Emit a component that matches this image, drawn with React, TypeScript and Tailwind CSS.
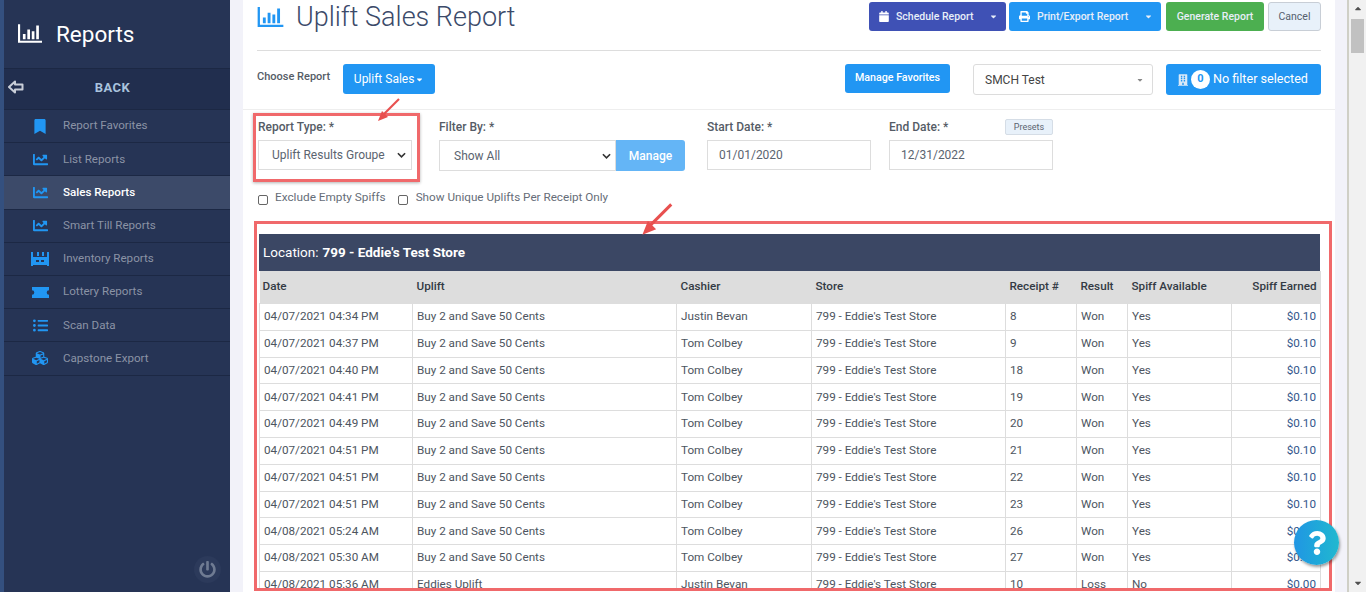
// Uplift Sales Report page
import React from 'react';
import { FaBookmark, FaChartLine, FaListUl, FaCubes, FaPowerOff, FaCalendar, FaPrint, FaBuilding, FaQuestion, FaCaretDown } from 'react-icons/fa';

const BarsIcon = ({ className }: { className: string }) => (
  <svg viewBox="0 0 27 21" className={className} fill="none" stroke="currentColor" strokeWidth="2.4">
    <path d="M1.2 0v19.8H27" />
    <path d="M7 11v6M12 6v11M17 8v9M22 1.5V17" strokeWidth="3" />
  </svg>
);

const InventoryIcon = ({ className }: { className: string }) => (
  <svg viewBox="0 0 18 14" className={className} fill="currentColor">
    <path d="M0 0h2v5h14V0h2v14h-2v-1H2v1H0z" />
    <path d="M6 0h2v4H6zM11 0h2v4h-2z" />
    <path d="M3 7h12v4H3z" />
    <path d="M5 8h3v2H5zM10 8h3v2h-3z" fill="#263455" />
  </svg>
);

const TicketIcon = ({ className }: { className: string }) => (
  <svg viewBox="0 0 17 11" className={className} fill="currentColor">
    <path d="M0 0h17v3.2a2.3 2.3 0 0 0 0 4.6V11H0V7.800a2.300 2.300 0 0 0 0-4.600z" />
  </svg>
);

const BackIcon = () => (
  <svg viewBox="0 0 16 14" className="w-[16px] h-[14px]" fill="none" stroke="#c9ced8" strokeWidth="2" strokeLinejoin="round">
    <path d="M1 7l6-5.500V4.500h7.500v5H7v3z" />
  </svg>
);

const Arrow = ({ className }: { className: string }) => (
  <svg viewBox="0 0 24 24" className={`absolute ${className}`} fill="none">
    <path d="M22 1L6 17" stroke="#e8504f" strokeWidth="2.2" />
    <path d="M1 23l4-10 6 6z" fill="#e8504f" />
  </svg>
);

const navItems = [
  { label: 'Report Favorites', icon: <FaBookmark className="w-[12px] h-[15px]" /> },
  { label: 'List Reports', icon: <FaChartLine className="w-[15px] h-[15px]" /> },
  { label: 'Sales Reports', icon: <FaChartLine className="w-[15px] h-[15px]" />, active: true },
  { label: 'Smart Till Reports', icon: <FaChartLine className="w-[15px] h-[15px]" /> },
  { label: 'Inventory Reports', icon: <InventoryIcon className="w-[18px] h-[14px]" /> },
  { label: 'Lottery Reports', icon: <TicketIcon className="w-[17px] h-[13px]" /> },
  { label: 'Scan Data', icon: <FaListUl className="w-[15px] h-[15px]" /> },
  { label: 'Capstone Export', icon: <FaCubes className="w-[16px] h-[16px]" /> },
];

const rows = [
  ['04/07/2021 04:34 PM', 'Buy 2 and Save 50 Cents', 'Justin Bevan', '8', 'Won', 'Yes', '$0.10'],
  ['04/07/2021 04:37 PM', 'Buy 2 and Save 50 Cents', 'Tom Colbey', '9', 'Won', 'Yes', '$0.10'],
  ['04/07/2021 04:40 PM', 'Buy 2 and Save 50 Cents', 'Tom Colbey', '18', 'Won', 'Yes', '$0.10'],
  ['04/07/2021 04:41 PM', 'Buy 2 and Save 50 Cents', 'Tom Colbey', '19', 'Won', 'Yes', '$0.10'],
  ['04/07/2021 04:49 PM', 'Buy 2 and Save 50 Cents', 'Tom Colbey', '20', 'Won', 'Yes', '$0.10'],
  ['04/07/2021 04:51 PM', 'Buy 2 and Save 50 Cents', 'Tom Colbey', '21', 'Won', 'Yes', '$0.10'],
  ['04/07/2021 04:51 PM', 'Buy 2 and Save 50 Cents', 'Tom Colbey', '22', 'Won', 'Yes', '$0.10'],
  ['04/07/2021 04:51 PM', 'Buy 2 and Save 50 Cents', 'Tom Colbey', '23', 'Won', 'Yes', '$0.10'],
  ['04/08/2021 05:24 AM', 'Buy 2 and Save 50 Cents', 'Tom Colbey', '26', 'Won', 'Yes', '$0.10'],
  ['04/08/2021 05:30 AM', 'Buy 2 and Save 50 Cents', 'Tom Colbey', '27', 'Won', 'Yes', '$0.10'],
  ['04/08/2021 05:36 AM', 'Eddies Uplift', 'Justin Bevan', '10', 'Loss', 'No', '$0.00'],
];

const Sidebar = () => (
  <aside className="w-[230px] shrink-0 h-full bg-[#263455] border-l-[4px] border-[#34507f] flex flex-col relative">
    <div className="h-[68px] shrink-0 flex items-center pl-[14px] text-white">
      <BarsIcon className="w-[24px] h-[19px] mb-[1px]" />
      <span className="ml-[14px] mt-[2px] text-[22.5px]">Reports</span>
    </div>
    <div className="h-[42px] shrink-0 bg-[#212e4e] border-y border-[#1c2844] flex items-center justify-center relative pr-[9px]">
      <span className="absolute left-[4px] top-[11px]"><BackIcon /></span>
      <span className="text-[13px] font-bold tracking-[0.5px] text-[#a9c3de] mb-[2px]">BACK</span>
    </div>
    {navItems.map((item) => (
      <div
        key={item.label}
        className={`h-[33.2px] shrink-0 flex items-center border-b border-[#1c2844] ${item.active ? 'bg-[#3c4a69]' : ''}`}
      >
        <span className="w-[32px] ml-[20px] flex justify-center text-[#2196f3]">{item.icon}</span>
        <span className={`ml-[7px] text-[11.6px] ${item.active ? 'text-white font-medium' : 'text-[#8b93a5]'}`}>{item.label}</span>
      </div>
    ))}
    <div className="absolute right-[9px] bottom-[9px] w-[27px] h-[27px] rounded-full bg-[#2c3a5b] flex items-center justify-center text-[#6f7b92]">
      <FaPowerOff className="w-[17px] h-[17px]" />
    </div>
  </aside>
);

const TopBar = () => (
  <div className="mx-[14px] h-[51px] flex items-start justify-between border-b border-[#dddddd]">
    <div className="flex items-center h-[33px]">
      <BarsIcon className="w-[27px] h-[20px] text-[#2196f3]" />
      <h1 className="ml-[12px] mt-[2px] text-[27px] leading-[33px] font-light text-[#3b4a69]">Uplift Sales Report</h1>
    </div>
    <div className="flex items-start pt-[2px] text-[10.5px] font-medium text-[#e8eef8]">
      <button className="w-[137px] h-[29px] rounded-[3px] bg-[#3f51b5] flex items-center pl-[10px]">
        <FaCalendar className="w-[10px] h-[11px] text-white" />
        <span className="ml-[7px]">Schedule Report</span>
        <FaCaretDown className="w-[9px] h-[9px] ml-auto mr-[8px]" />
      </button>
      <button className="ml-[3px] w-[152px] h-[29px] rounded-[3px] bg-[#2196f3] flex items-center pl-[10px]">
        <FaPrint className="w-[11px] h-[11px] text-white" />
        <span className="ml-[7px]">Print/Export Report</span>
        <FaCaretDown className="w-[9px] h-[9px] ml-auto mr-[8px]" />
      </button>
      <button className="ml-[5px] w-[98px] h-[29px] rounded-[3px] bg-[#4caf50] text-center">Generate Report</button>
      <button className="ml-[4px] w-[53px] h-[29px] rounded-[3px] bg-[#e8f1fa] border border-[#c8ced6] text-[#55606e] font-normal">Cancel</button>
    </div>
  </div>
);

const ChooseRow = () => (
  <div className="h-[59px] pl-[14px] pr-[14px] flex items-start pt-[13px] border-b border-[#eeeeee]">
    <span className="text-[11px] font-medium text-[#555c66] mt-[5px]">Choose Report</span>
    <button className="ml-[13px] w-[92px] h-[30px] rounded-[3px] bg-[#2196f3] text-white text-[12px] flex items-center justify-center">
      Uplift Sales
      <FaCaretDown className="w-[9px] h-[9px] ml-[1px]" />
    </button>
    <button className="ml-auto w-[105px] h-[29px] rounded-[3px] bg-[#2196f3] text-white text-[10.7px] font-medium">Manage Favorites</button>
    <div className="ml-[23px] w-[180px] h-[31px] rounded-[3px] bg-white border border-[#dcdcdc] flex items-center pl-[11px] text-[12px] text-[#444]">
      SMCH Test
      <FaCaretDown className="w-[8px] h-[8px] ml-auto mr-[8px] text-[#888]" />
    </div>
    <button className="ml-[13px] w-[155px] h-[31px] rounded-[3px] bg-[#2196f3] text-white text-[12.6px] flex items-center pl-[12px]">
      <FaBuilding className="w-[10px] h-[14px] text-[#dbe9f7]" />
      <span className="ml-[3px] w-[19px] h-[19px] rounded-full bg-white text-[#2196f3] text-[11px] font-bold flex items-center justify-center">0</span>
      <span className="ml-[3px]">No filter selected</span>
    </button>
  </div>
);

const Chevron = () => (
  <svg viewBox="0 0 10 6" className="w-[9px] h-[6px] ml-auto mr-[4px]" fill="none" stroke="#333" strokeWidth="1.8">
    <path d="M1 1l4 4 4-4" />
  </svg>
);

const Label = ({ children }: { children: React.ReactNode }) => (
  <div className="text-[12px] leading-[14px] font-medium text-[#555c66]">{children}</div>
);

const FilterRow = () => (
  <div className="relative pl-[15px] pt-[10px] h-[72px] flex items-start">
    <div className="relative w-[154px]">
      <Label>Report Type: *</Label>
      <div className="mt-[6px] w-[154px] h-[30px] border border-[#dddddd] bg-white flex items-center pl-[13px] pr-[1px] text-[12px] text-[#5b6470]">
        Uplift Results Groupe
        <Chevron />
      </div>
      {/* red annotation box */}
      <div className="absolute left-[-5px] top-[-7px] w-[167px] h-[69px] border-[3px] border-[#f0696b] shadow-[0_1px_3px_rgba(0,0,0,0.3)]" />
    </div>
    <div className="ml-[27px] w-[246px]">
      <Label>Filter By: *</Label>
      <div className="mt-[6px] flex">
        <div className="w-[177px] h-[31px] border border-[#dddddd] flex items-center pl-[14px] text-[12px] text-[#5b6470]">
          Show All
          <Chevron />
        </div>
        <button className="w-[69px] h-[31px] rounded-r-[3px] bg-[#64b5f6] text-white text-[12px] font-medium">Manage</button>
      </div>
    </div>
    <div className="ml-[22px] w-[164px]">
      <Label>Start Date: *</Label>
      <div className="mt-[6px] h-[30px] border border-[#dddddd] flex items-center pl-[11px] text-[12px] text-[#5b6470]">01/01/2020</div>
    </div>
    <div className="ml-[18px] w-[164px] relative">
      <Label>End Date: *</Label>
      <span className="absolute right-0 top-[-1px] w-[48px] h-[16px] rounded-[2px] bg-[#e8f1fa] border border-[#d5dde6] text-[9px] leading-[14px] text-center text-[#5b6470]">Presets</span>
      <div className="mt-[6px] h-[30px] border border-[#dddddd] flex items-center pl-[11px] text-[12px] text-[#5b6470]">12/31/2022</div>
    </div>
  </div>
);

const CheckRow = () => (
  <div className="pl-[15px] h-[34px] flex items-start text-[#666d78]">
    <span className="mt-[13px] w-[10px] h-[10px] rounded-[2px] border border-[#666] bg-white" />
    <span className="ml-[7px] mt-[7px] text-[11.8px]">Exclude Empty Spiffs</span>
    <span className="ml-[12px] mt-[13px] w-[10px] h-[10px] rounded-[2px] border border-[#666] bg-white" />
    <span className="ml-[8px] mt-[7px] text-[11.7px]">Show Unique Uplifts Per Receipt Only</span>
  </div>
);

const cellClass = 'border border-[#dddddd] px-[4px] whitespace-nowrap overflow-hidden';

const ReportTable = () => (
  <div className="ml-[11px] mt-[5px] w-[1078px] h-[370px] border-[3px] border-[#f0696b] pl-[2px] pr-[9px] pt-[10px] overflow-hidden">
    <div className="h-[37px] bg-[#3b4764] text-white text-[13.500px] flex items-center pl-[4px]">
      <span>Location:</span>
      <span className="ml-[4px] font-bold">799 - Eddie's Test Store</span>
    </div>
    <table className="w-[1061px] table-fixed border-collapse text-[11.7px] text-[#4d5560]">
      <colgroup>
        <col className="w-[153px]" />
        <col className="w-[264px]" />
        <col className="w-[135px]" />
        <col className="w-[194px]" />
        <col className="w-[71px]" />
        <col className="w-[51px]" />
        <col className="w-[104px]" />
        <col className="w-[89px]" />
      </colgroup>
      <thead>
        <tr className="h-[32.5px] bg-[#dddddd] text-[#333a44] text-left font-medium">
          <th className="px-[3px] font-medium">Date</th>
          <th className="px-[4px] font-medium">Uplift</th>
          <th className="px-[4px] font-medium">Cashier</th>
          <th className="px-[4px] font-medium">Store</th>
          <th className="px-[4px] font-medium">Receipt #</th>
          <th className="px-[4px] font-medium">Result</th>
          <th className="px-[4px] font-medium">Spiff Available</th>
          <th className="px-[4px] font-medium text-right">Spiff Earned</th>
        </tr>
      </thead>
      <tbody>
        {rows.map((r, i) => (
          <tr key={i} className="h-[26.8px]">
            <td className={cellClass}>{r[0]}</td>
            <td className={cellClass}>{r[1]}</td>
            <td className={cellClass}>{r[2]}</td>
            <td className={cellClass}>799 - Eddie's Test Store</td>
            <td className={cellClass}>{r[3]}</td>
            <td className={cellClass}>{r[4]}</td>
            <td className={cellClass}>{r[5]}</td>
            <td className={`${cellClass} text-right text-[#34568b]`}>{r[6]}</td>
          </tr>
        ))}
      </tbody>
    </table>
  </div>
);

const Scrollbar = () => (
  <div className="w-[17px] shrink-0 h-full bg-[#f1f1f1] flex flex-col items-center relative">
    <FaCaretDown className="w-[10px] h-[10px] mt-[4px] rotate-180 text-[#505050]" />
    <div className="w-[13px] h-[34px] mt-[5px] bg-[#c1c1c1]" />
    <FaCaretDown className="absolute bottom-[4px] w-[10px] h-[10px] text-[#505050]" />
  </div>
);

export default function App() {
  return (
    <div className="relative flex w-[1366px] h-[592px] overflow-hidden bg-[#f2f2f9] font-['Roboto',sans-serif]">
      <Sidebar />
      <main className="w-[1119px] shrink-0 h-full pl-[13px] pr-[12px] border-r-[2px] border-[#cfcfc6]">
        <div className="w-[1092px] h-full bg-white overflow-hidden">
          <TopBar />
          <ChooseRow />
          <FilterRow />
          <CheckRow />
          <ReportTable />
        </div>
      </main>
      <Scrollbar />
      <Arrow className="left-[377px] top-[98px] w-[24px] h-[24px]" />
      <Arrow className="left-[641px] top-[203px] w-[33px] h-[33px]" />
      <button className="absolute left-[1294px] top-[520px] w-[45px] h-[45px] rounded-full bg-gradient-to-r from-[#2196e3] to-[#22b8cf] shadow-[1px_2px_3px_rgba(0,0,0,0.4)] flex items-center justify-center text-white">
        <FaQuestion className="w-[20px] h-[24px]" />
      </button>
    </div>
  );
}
